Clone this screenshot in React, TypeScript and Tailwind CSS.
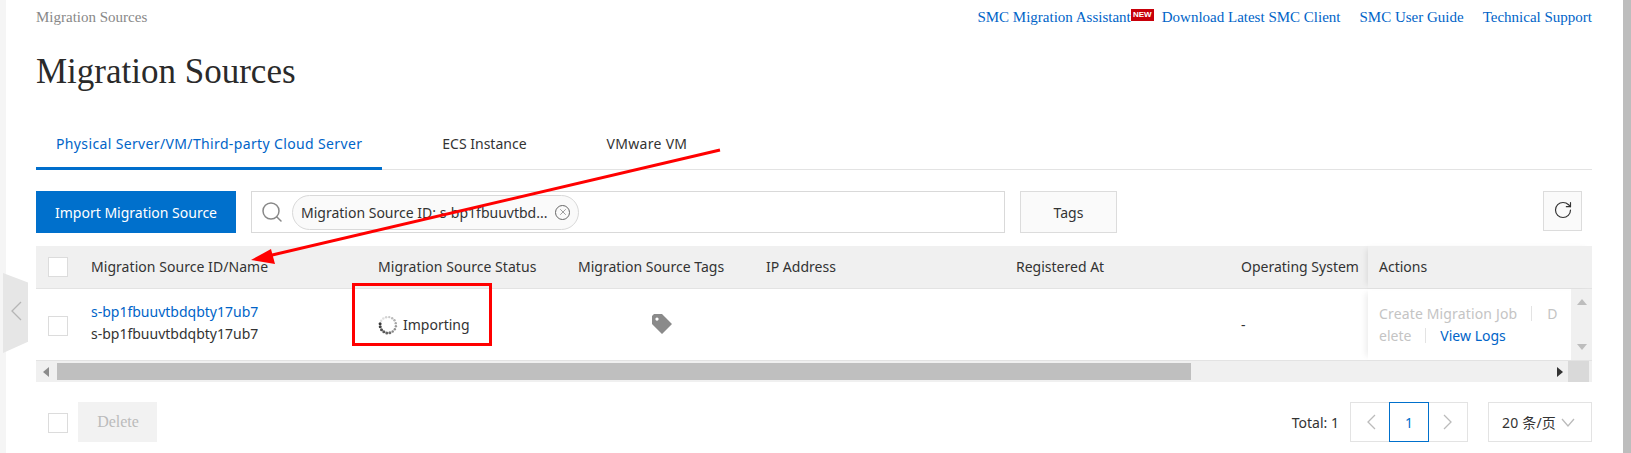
import React from 'react';
import { RotateCw, Search, X } from 'lucide-react';

const serif = "font-['Liberation_Serif',serif]";

const Check = () => <span className="block h-5 w-5 border border-[#dcdcdc] bg-white" />;

const Spinner = () => {
  const dots = Array.from({ length: 16 }, (_, i) => i);
  return (
    <svg width="20" height="20" viewBox="0 0 20 20" className="shrink-0">
      {dots.map((i) => {
        const a = (i / 16) * Math.PI * 2;
        // darkest dot sits lower left, the ring fades going clockwise over the top
        const o = i < 6 ? 0.9 - i * 0.05 : Math.max(0.15, 0.6 - (i - 5) * 0.05);
        const r = i < 6 ? 1.5 : 1.2;
        return <circle key={i} cx={10 + 8 * Math.cos(Math.PI * 1.05 - a)} cy={10 + 8 * Math.sin(Math.PI * 1.05 - a)} r={r} fill="#222" opacity={o} />;
      })}
    </svg>
  );
};

const TagIcon = () => (
  <svg width="22" height="22" viewBox="0 0 22 22">
    <path fillRule="evenodd" fill="#8a8a8a" d="M1 3 L3 1 L11 1 L21 11 L11 21 L1 11 Z M6 4.5 a1.6 1.6 0 1 0 0.01 0 Z" />
  </svg>
);

const Chevron: React.FC<{ points: string; w: number; h: number; color?: string }> = ({ points, w, h, color = '#bbb' }) => (
  <svg width={w} height={h} viewBox={`0 0 ${w} ${h}`}>
    <polyline points={points} fill="none" stroke={color} strokeWidth="1.3" />
  </svg>
);

const Annotation = () => (
  <svg width="1631" height="453" className="pointer-events-none absolute left-0 top-0">
    <rect x="353.5" y="284.5" width="137" height="60" fill="none" stroke="#ff0000" strokeWidth="3" />
    <line x1="720" y1="150" x2="268" y2="256" stroke="#ff0000" strokeWidth="3" />
    <polygon points="251,260 271,249 275,264" fill="#ff0000" />
  </svg>
);

const App: React.FC = () => {
  return (
    <div className="relative flex h-[453px] w-[1631px] overflow-hidden bg-white font-['Noto_Sans',sans-serif] text-[14px] text-[#333]">
      <div className="w-[6px] shrink-0 bg-[#f5f5f5]" />

      <main className="ml-[30px] w-[1556px] shrink-0">
        {/* breadcrumb and links */}
        <div className={`flex h-[34px] items-center justify-between text-[15px] ${serif}`}>
          <span className="text-[#888]">Migration Sources</span>
          <div className="flex items-center text-[#0064c8]">
            <span>SMC Migration Assistant</span>
            <span className="mb-[5px] flex h-3 w-[23px] items-center justify-center bg-[#c8000a] font-['Liberation_Sans',sans-serif] text-[8px] font-bold text-white">NEW</span>
            <span className="ml-2">Download Latest SMC Client</span>
            <span className="ml-[19px]">SMC User Guide</span>
            <span className="ml-[19px]">Technical Support</span>
          </div>
        </div>

        <h1 className={`mt-[15px] text-[35px] leading-[46px] text-[#2a2a2a] ${serif}`}>Migration Sources</h1>

        {/* tabs */}
        <div className="mt-[27px] flex h-[48px] gap-10 border-b border-[#e3e3e3]">
          <div className="-mb-px border-b-[3px] border-[#006ecc] px-5 pt-[11px] tracking-[0.36px] text-[#0064c8]">Physical Server/VM/Third-party Cloud Server</div>
          <div className="px-5 pt-[11px]">ECS Instance</div>
          <div className="px-5 pt-[11px] tracking-[0.3px]">VMware VM</div>
        </div>

        {/* toolbar */}
        <div className="mt-[21px] flex h-[42px] items-start">
          <button className="h-[42px] w-[200px] bg-[#0070cc] text-white">Import Migration Source</button>
          <div className="ml-[15px] flex h-[42px] w-[754px] items-center border border-[#d9d9d9] pl-[8px]">
            <Search size={24} strokeWidth={1.5} className="text-[#888]" />
            <div className="ml-[8px] flex h-[35px] w-[287px] items-center rounded-full border border-[#d9d9d9] bg-[#fafafa] pl-2">
              <span className="whitespace-nowrap">Migration Source ID: s-bp1fbuuvtbd...</span>
              <span className="ml-[8px] flex h-[15px] w-[15px] items-center justify-center rounded-full border border-[#666] text-[#666]">
                <X size={10} strokeWidth={1.5} />
              </span>
            </div>
          </div>
          <button className="ml-[15px] h-[42px] w-[97px] border border-[#dcdcdc] bg-[#fafafa]">Tags</button>
          <button className="ml-auto mr-[10px] flex h-[40px] w-[39px] items-center justify-center border border-[#dcdcdc] bg-[#fafafa]">
            <RotateCw size={20} strokeWidth={1.4} className="-mt-[3px]" />
          </button>
        </div>

        {/* table */}
        <div className="mt-[13px] flex h-[43px] items-center border-b border-[#e3e3e3] bg-[#f0f0f0]">
          <div className="w-[43px] shrink-0 pl-3"><Check /></div>
          <div className="w-[287px] shrink-0 pb-px pl-3 tracking-[0.05px]">Migration Source ID/Name</div>
          <div className="w-[200px] shrink-0 pb-px pl-3 tracking-[0.05px]">Migration Source Status</div>
          <div className="w-[188px] shrink-0 pb-px pl-3">Migration Source Tags</div>
          <div className="w-[250px] shrink-0 pb-px pl-3">IP Address</div>
          <div className="w-[225px] shrink-0 pb-px pl-3">Registered At</div>
          <div className="h-full w-[139px] shrink-0 pl-3 leading-[41px]">Operating System</div>
          <div className="h-full flex-1 pl-[11px] leading-[41px] shadow-[-4px_0_6px_-3px_rgba(0,0,0,0.1)]">Actions</div>
        </div>
        <div className="flex h-[72px] border-b border-[#e3e3e3]">
          <div className="flex w-[43px] shrink-0 items-center pl-3 pt-[2px]"><Check /></div>
          <div className="flex w-[287px] shrink-0 flex-col justify-center pb-[3px] pl-3 leading-[22px]">
            <span className="text-[#0064c8]">s-bp1fbuuvtbdqbty17ub7</span>
            <span>s-bp1fbuuvtbdqbty17ub7</span>
          </div>
          <div className="flex w-[200px] shrink-0 items-center gap-[5px] pl-3"><Spinner />Importing</div>
          <div className="flex w-[188px] shrink-0 items-center pl-[85px] pb-[2px]"><TagIcon /></div>
          <div className="w-[250px] shrink-0" />
          <div className="w-[225px] shrink-0" />
          <div className="flex w-[139px] shrink-0 items-center pl-3">-</div>
          <div className="w-[203px] shrink-0 pl-[11px] pt-[14px] leading-[22px] text-[#c4c4c4] shadow-[-6px_0_6px_-4px_rgba(0,0,0,0.08)]">
            <div className="flex">
              <span className="tracking-[0.15px]">Create Migration Job</span>
              <span className="ml-[14px] mt-[3px] h-[15px] w-px bg-[#e3e3e3]" />
              <span className="ml-[15px]">D</span>
            </div>
            <div className="flex">
              <span>elete</span>
              <span className="ml-[14px] mt-[3px] h-[15px] w-px bg-[#e3e3e3]" />
              <span className="ml-[14px] text-[#0064c8]">View Logs</span>
            </div>
          </div>
          <div className="flex w-[21px] shrink-0 flex-col items-center justify-between bg-[#f0f0f0] py-[10px]">
            <span className="h-0 w-0 border-x-[5px] border-b-[6px] border-x-transparent border-b-[#bdbdbd]" />
            <span className="h-0 w-0 border-x-[5px] border-t-[6px] border-x-transparent border-t-[#bdbdbd]" />
          </div>
        </div>
        <div className="flex h-[21px] items-center bg-[#f0f0f0]">
          <span className="ml-[7px] h-0 w-0 border-y-[5px] border-r-[6px] border-y-transparent border-r-[#8c8c8c]" />
          <span className="ml-[8px] h-[17px] w-[1134px] bg-[#bfbfbf]" />
          <span className="ml-[366px] h-0 w-0 border-y-[5px] border-l-[6px] border-y-transparent border-l-[#333]" />
          <span className="ml-[5px] h-full w-[21px] bg-[#d9d9d9]" />
        </div>

        {/* footer */}
        <div className="mt-5 flex h-10 items-center">
          <div className="ml-3 pt-[2px]"><Check /></div>
          <button className={`ml-[10px] h-10 w-[79px] bg-[#f2f2f2] pl-px text-[16px] text-[#bbb] ${serif}`}>Delete</button>
          <span className="ml-auto">Total: 1</span>
          <div className="ml-[11px] flex h-10 w-[118px] border border-[#e3e3e3]">
            <span className="flex w-[38px] items-center justify-center pl-px"><Chevron w={10} h={16} points="9,1 2,8 9,15" /></span>
            <span className="-my-px flex w-10 items-center justify-center border border-[#0070cc] text-[#0070cc]">1</span>
            <span className="flex w-[38px] items-center justify-center"><Chevron w={10} h={16} points="1,1 8,8 1,15" /></span>
          </div>
          <div className="ml-5 flex h-10 w-[104px] items-center border border-[#e3e3e3] pl-[13px] font-['Noto_Sans','Noto_Sans_CJK_SC',sans-serif]">
            <span className="whitespace-nowrap tracking-[0.2px]">20 条/页</span>
            <span className="ml-[5px] mt-[2px]"><Chevron w={14} h={10} points="1,1 7,8 13,1" /></span>
          </div>
        </div>
      </main>

      <div className="ml-auto w-2 shrink-0 bg-[#bdbdbd]" />

      {/* collapse handle */}
      <div className="absolute left-[3px] top-[273px] flex h-[80px] w-[25px] items-center justify-center bg-[#e6e6e6] [clip-path:polygon(0_0,100%_12%,100%_86%,0_100%)]">
        <span className="-mt-[5px]"><Chevron w={12} h={20} points="11,1 2,10 11,19" color="#b5b5b5" /></span>
      </div>

      <Annotation />
    </div>
  );
};

export default App;
